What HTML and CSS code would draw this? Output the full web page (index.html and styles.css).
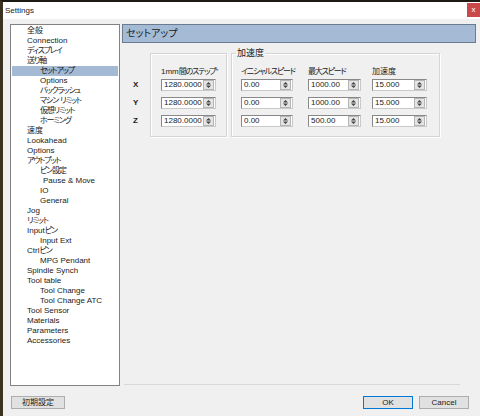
FILE: index.html
```html
<!DOCTYPE html>
<html>
<head>
  <title>Settings</title>
  <link rel="stylesheet" href="styles.css">
</head>
<body>

<div class="window">
  <div class="titlebar">
    <span class="title">Settings</span>
    <span class="close">x</span>
  </div>

  <div class="main">
    <!-- settings tree -->
    <ul class="tree">
      <li class="l1">全般</li>
      <li class="l1">Connection</li>
      <li class="l1 ja">ディスプレイ</li>
      <li class="l1 ja">送り軸</li>
      <li class="l2 sel ja">セットアップ</li>
      <li class="l2">Options</li>
      <li class="l2 ja">バックラッシュ</li>
      <li class="l2 ja">マシン&nbsp; リミット</li>
      <li class="l2 ja">仮想リミット</li>
      <li class="l2 ja">ホーミング</li>
      <li class="l1">速度</li>
      <li class="l1">Lookahead</li>
      <li class="l1">Options</li>
      <li class="l1 ja">アウトプット</li>
      <li class="l2 ja">ピン設定</li>
      <li class="l3">Pause &amp; Move</li>
      <li class="l2">IO</li>
      <li class="l2">General</li>
      <li class="l1">Jog</li>
      <li class="l1 ja">リミット</li>
      <li class="l1">Input<span class="ja">ピン</span></li>
      <li class="l2">Input Ext</li>
      <li class="l1">Ctrl<span class="ja">ピン</span></li>
      <li class="l2">MPG Pendant</li>
      <li class="l1">Spindle Synch</li>
      <li class="l1">Tool table</li>
      <li class="l2">Tool Change</li>
      <li class="l2">Tool Change ATC</li>
      <li class="l1">Tool Sensor</li>
      <li class="l1">Materials</li>
      <li class="l1">Parameters</li>
      <li class="l1">Accessories</li>
    </ul>

    <div class="panel">
      <div class="panel-head">セットアップ</div>
      <div class="page">
        <div class="axes">
          <div>X</div>
          <div>Y</div>
          <div>Z</div>
        </div>

        <div class="group steps">
          <div class="col w55">
            <div class="hdr">1mm<span class="ja">間のステップ</span>"</div>
            <div class="spin"><span class="val">1280.0000</span><span class="arrows"><svg width="7" height="8" viewBox="0 0 7 8"><path d="M3.5 1L6 3.5H1z M3.5 7L1 4.5h5z" fill="#444"/></svg></span></div>
            <div class="spin"><span class="val">1280.0000</span><span class="arrows"><svg width="7" height="8" viewBox="0 0 7 8"><path d="M3.5 1L6 3.5H1z M3.5 7L1 4.5h5z" fill="#444"/></svg></span></div>
            <div class="spin"><span class="val">1280.0000</span><span class="arrows"><svg width="7" height="8" viewBox="0 0 7 8"><path d="M3.5 1L6 3.5H1z M3.5 7L1 4.5h5z" fill="#444"/></svg></span></div>
          </div>
        </div>

        <fieldset class="group accel">
          <legend>加速度</legend>
          <div class="cols">
            <div class="col w52">
              <div class="hdr ja">イニシャルスピード</div>
              <div class="spin"><span class="val">0.00</span><span class="arrows"><svg width="7" height="8" viewBox="0 0 7 8"><path d="M3.5 1L6 3.5H1z M3.5 7L1 4.5h5z" fill="#444"/></svg></span></div>
              <div class="spin"><span class="val">0.00</span><span class="arrows"><svg width="7" height="8" viewBox="0 0 7 8"><path d="M3.5 1L6 3.5H1z M3.5 7L1 4.5h5z" fill="#444"/></svg></span></div>
              <div class="spin"><span class="val">0.00</span><span class="arrows"><svg width="7" height="8" viewBox="0 0 7 8"><path d="M3.5 1L6 3.5H1z M3.5 7L1 4.5h5z" fill="#444"/></svg></span></div>
            </div>
            <div class="col w53">
              <div class="hdr ja">最大スピード</div>
              <div class="spin"><span class="val">1000.00</span><span class="arrows"><svg width="7" height="8" viewBox="0 0 7 8"><path d="M3.5 1L6 3.5H1z M3.5 7L1 4.5h5z" fill="#444"/></svg></span></div>
              <div class="spin"><span class="val">1000.00</span><span class="arrows"><svg width="7" height="8" viewBox="0 0 7 8"><path d="M3.5 1L6 3.5H1z M3.5 7L1 4.5h5z" fill="#444"/></svg></span></div>
              <div class="spin"><span class="val">500.00</span><span class="arrows"><svg width="7" height="8" viewBox="0 0 7 8"><path d="M3.5 1L6 3.5H1z M3.5 7L1 4.5h5z" fill="#444"/></svg></span></div>
            </div>
            <div class="col w55">
              <div class="hdr">加速度</div>
              <div class="spin"><span class="val">15.000</span><span class="arrows"><svg width="7" height="8" viewBox="0 0 7 8"><path d="M3.5 1L6 3.5H1z M3.5 7L1 4.5h5z" fill="#444"/></svg></span></div>
              <div class="spin"><span class="val">15.000</span><span class="arrows"><svg width="7" height="8" viewBox="0 0 7 8"><path d="M3.5 1L6 3.5H1z M3.5 7L1 4.5h5z" fill="#444"/></svg></span></div>
              <div class="spin"><span class="val">15.000</span><span class="arrows"><svg width="7" height="8" viewBox="0 0 7 8"><path d="M3.5 1L6 3.5H1z M3.5 7L1 4.5h5z" fill="#444"/></svg></span></div>
            </div>
          </div>
        </fieldset>
      </div>
    </div>
  </div>

  <div class="footer">
    <button class="btn reset">初期設定</button>
    <button class="btn ok">OK</button>
    <button class="btn">Cancel</button>
  </div>
</div>

</body>
</html>
```

FILE: styles.css
```css
body {
  margin: 0;
  font-family: "Liberation Sans", "Noto Sans CJK JP", sans-serif;
  font-size: 8px;
  color: #1a1a1a;
  font-feature-settings: "palt";
}

/* kana set tight, like the dialog's UI font */
.ja {
  letter-spacing: -1.2px;
}

.window {
  width: 480px;
  height: 416px;
  box-sizing: border-box;
  border-top: 2px solid #1d1a14;
  border-left: 3px solid #3b3222;
  background: #f0f0f0;
  display: flex;
  flex-direction: column;
}

.titlebar {
  height: 17px;
  background: #fff;
  display: flex;
  align-items: center;
  padding-left: 2px;
}

.close {
  margin-left: auto;
  align-self: flex-start;
  margin-top: 1px;
  width: 13px;
  height: 14px;
  background: #c9494b;
  color: #fff;
  text-align: center;
  line-height: 13px;
  font-size: 8px;
}

.main {
  display: flex;
  padding: 5px 0 0 7px;
}

/* tree on the left */
.tree {
  list-style: none;
  margin: 0;
  padding: 1px 0 0;
  width: 110px;
  height: 362px;
  box-sizing: border-box;
  border: 1px solid #828282;
  background: #fff;
}

.tree li {
  line-height: 10px;
  height: 10px;
  white-space: nowrap;
}

.tree .l1 { padding-left: 16px; }
.tree .l2 { padding-left: 29px; }
.tree .l3 { padding-left: 32px; }

.tree .sel {
  background: #a3b9d4;
  margin: 0 1px;
  padding-left: 28px;
}

/* right page */
.panel {
  margin-left: 2px;
  width: 354px;
}

.panel-head {
  height: 19px;
  box-sizing: border-box;
  border: 1px solid #6a7b90;
  background: #a5bbd5;
  font-size: 10px;
  line-height: 17px;
  padding-left: 3px;
}

.page {
  display: flex;
  align-items: flex-start;
  margin: 0 16px 0 2px;
  padding: 6px 0 0 9px;
  height: 342px;
  box-sizing: border-box;
  border-bottom: 1px solid #d9d9d9;
}

.axes {
  width: 17px;
  padding-top: 30px;
  font-weight: bold;
}

.axes div {
  height: 12px;
  line-height: 12px;
  margin-bottom: 6px;
}

.group {
  border: 1px solid #d5d5d5;
  box-shadow: inset 1px 1px 0 #fff, 1px 1px 0 #fff;
  box-sizing: border-box;
}

.steps {
  margin-top: 4px;
  width: 77px;
  padding: 13px 0 9px 10px;
}

.accel {
  margin: 0 0 0 4px;
  width: 209px;
  padding: 0 0 9px 9px;
  min-width: 0;
}

.accel legend {
  font-size: 9px;
  line-height: 8px;
  padding: 0 1px;
  margin-left: -5px;
}

.accel .cols {
  padding-top: 10px;
  display: flex;
}

.col {
  display: flex;
  flex-direction: column;
}

.w52 { width: 52px; }
.w53 { width: 53px; margin-left: 15px; }
.cols .w55 { margin-left: 11px; }
.w55 { width: 55px; }

.hdr {
  height: 10px;
  line-height: 10px;
  margin-bottom: 2px;
  white-space: nowrap;
}

.spin {
  display: flex;
  align-items: center;
  height: 12px;
  box-sizing: border-box;
  border: 1px solid #c9c9c9;
  border-top-color: #888;
  border-left-color: #888;
  background: #fff;
}

.spin + .spin {
  margin-top: 6px;
}

.val {
  flex: 1;
  padding-left: 2px;
  line-height: 10px;
}

.arrows {
  width: 9px;
  height: 8px;
  margin-right: 1px;
  background: #e4e4e4;
  border: 1px solid #b5b5b5;
  display: flex;
  align-items: center;
  justify-content: center;
}

.arrows svg {
  display: block;
}

/* dialog buttons */
.footer {
  display: flex;
  padding: 10px 11px 0 8px;
}

.btn {
  height: 13px;
  width: 50px;
  padding: 0;
  margin: 0;
  font-family: inherit;
  font-size: 8px;
  line-height: 11px;
  background: #e1e1e1;
  border: 1px solid #adadad;
  color: #1a1a1a;
}

.reset {
  width: 54px;
  margin-right: auto;
}

.ok {
  border-color: #0078d7;
  margin-right: 6px;
}
```
